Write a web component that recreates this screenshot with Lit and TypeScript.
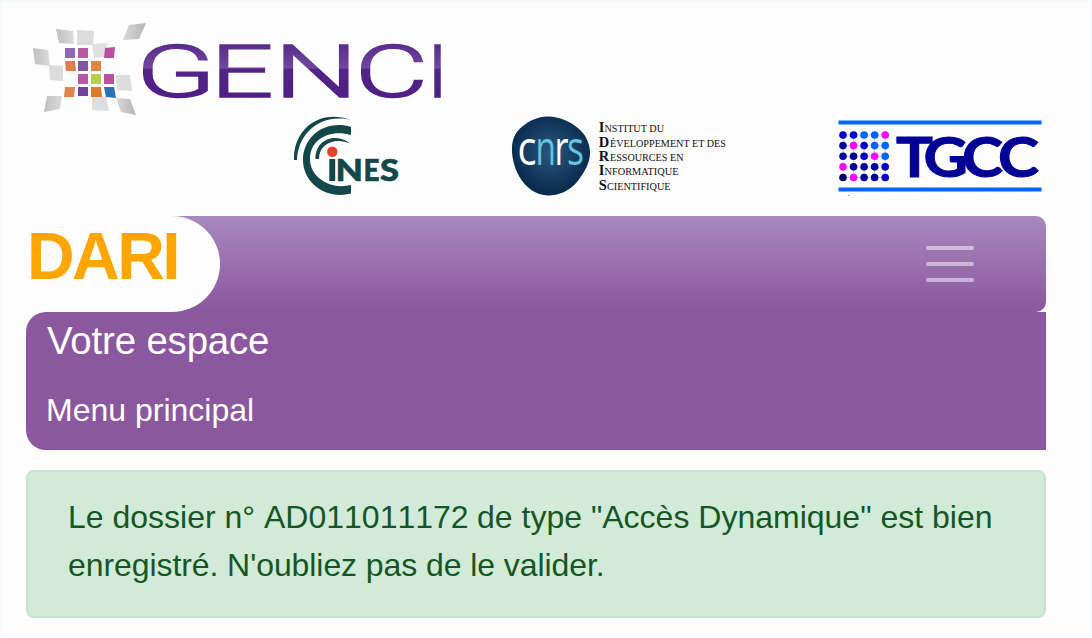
import { LitElement, html, svg, css } from "lit";
import { customElement } from "lit/decorators.js";

/** One letter of a wordmark: [character, left, width] */
type Letter = [string, number, number];

@customElement("genci-logo")
class GenciLogo extends LitElement {
  static styles = css`
    :host { display: block; }
    svg { display: block; }
    .word { font-family: Roboto, Inter, "Liberation Sans", sans-serif; font-weight: 300; font-size: 73px; stroke-width: 1.6px; }
  `;
  private letters: Letter[] = [
    ["G", 136, 80], ["E", 210.5, 63], ["N", 274, 84], ["C", 355, 73], ["I", 427, 21],
  ];
  private tiles: [string, string][] = [
    ["56,29 73,31 74,44 59,43", "url(#tileB)"],
    ["77,30 94,31 93,45 77,45", "#dcdcdc"],
    ["129,25 146,23 139,39 123,40", "url(#tileA)"],
    ["92,44 108,43 104,57 94,58", "#e0e0e0"],
    ["33,48 48,50 50,66 35,64", "url(#tileB)"],
    ["49,65 63,66 63,81 50,80", "#dcdcdc"],
    ["116,75 130,75 132,91 117,90", "#dcdcdc"],
    ["47,96 62,96 60,109 44,112", "url(#tileB)"],
    ["92,97 106,96 109,111 92,110", "#dedede"],
    ["116,98 130,99 136,115 121,112", "url(#tileA)"],
    ["65,48 75,48 75,58 65,58", "#9068b4"],
    ["78,48 88,48 88,58 78,58", "#bd58a3"],
    ["105,48 115,47 114,58 104,58", "#b9509f"],
    ["65,61 75,61 76,71 66,71", "#e07f4b"],
    ["78,61 88,61 88,71 78,71", "#7f55a4"],
    ["91,61 101,61 101,71 91,71", "#e08545"],
    ["78,74 88,74 88,84 78,84", "#bd55a6"],
    ["91,74 101,74 101,84 91,84", "#b7cf50"],
    ["104,74 114,74 114,84 104,84", "#b953a1"],
    ["65,87 75,87 74,97 64,97", "#e08650"],
    ["78,87 88,87 88,96 78,96", "#70429a"],
    ["91,87 101,87 102,97 91,97", "#dc7a29"],
    ["104,87 114,87 116,98 106,97", "#2873b8"],
  ];
  render() {
    return html`<svg width="450" height="116" viewBox="0 0 450 116" role="img" aria-label="GENCI">
      <defs>
        <linearGradient id="tileA"><stop stop-color="#d8d8d8" /><stop offset="1" stop-color="#b5b5b5" /></linearGradient>
        <linearGradient id="tileB"><stop stop-color="#bfbfbf" /><stop offset="1" stop-color="#dcdcdc" /></linearGradient>
        <linearGradient id="ink" gradientUnits="userSpaceOnUse" x1="0" y1="44" x2="0" y2="98">
          <stop stop-color="#572b8b" /><stop offset=".45" stop-color="#71489f" />
          <stop offset=".46" stop-color="#532588" /><stop offset="1" stop-color="#4f1f84" />
        </linearGradient>
      </defs>
      ${this.tiles.map(([p, f]) => svg`<polygon points=${p} fill=${f} />`)}
      ${this.letters.map(([c, x, w]) => svg`<text class="word" x=${x} y="97.200" textLength=${w} lengthAdjust="spacingAndGlyphs" fill="url(#ink)" stroke="url(#ink)">${c}</text>`)}
    </svg>`;
  }
}

@customElement("cines-logo")
class CinesLogo extends LitElement {
  static styles = css`
    :host { display: block; }
    svg { display: block; }
    .word { font-family: Lato, "Open Sans", sans-serif; font-weight: 900; font-size: 31px; fill: #14474a; stroke: #14474a; stroke-width: .6px; }
  `;
  private letters: Letter[] = [["N", 335.5, 27.5], ["E", 363.5, 16], ["S", 380, 19]];
  render() {
    return html`<svg width="110" height="84" viewBox="292 114 110 84" role="img" aria-label="CINES">
      <path fill="#14474a" d="M294 160C293 130 319 108 351 120C322 113 298 132 297 160Z" />
      <path fill="#14474a" d="M351 127C326 119 303 136 303 160C303 183 326 200 351 193.500V185C331 190 310 178 310 159C310 139 330 129 351 135Z" />
      <path fill="#14474a" d="M315.500 159C315 141 333 131 350.500 143.500C335 137 319 143 319 159Z" />
      <circle cx="332.300" cy="151.700" r="5.200" fill="#e0452c" />
      <rect x="329.300" y="159" width="5.900" height="22" fill="#14474a" />
      ${this.letters.map(([c, x, w]) => svg`<text class="word" x=${x} y="180.700" textLength=${w} lengthAdjust="spacingAndGlyphs">${c}</text>`)}
    </svg>`;
  }
}

@customElement("idris-logo")
class IdrisLogo extends LitElement {
  static styles = css`
    :host { display: block; }
    svg { display: block; }
    .cnrs { font-family: "Open Sans", sans-serif; font-weight: 500; font-size: 47px; }
    .line { font-family: "Liberation Serif", serif; font-size: 11px; fill: #111; }
    .cap { font-family: "Liberation Serif", serif; font-weight: 700; font-size: 14.5px; fill: #111; }
  `;
  private lines: [string, string, number, number][] = [
    ["I", "NSTITUT DU", 604.5, 59.5], ["D", "ÉVELOPPEMENT ET DES", 610, 116], ["R", "ESSOURCES EN", 610, 73.5],
    ["I", "NFORMATIQUE", 604.5, 74], ["S", "CIENTIFIQUE", 607, 63.5],
  ];
  private cnrs: [string, number, number, string][] = [
    ["c", 517.5, 19, "#fff"], ["n", 535.5, 20.5, "#62c4dd"], ["r", 554.5, 14, "#fff"], ["s", 567, 17, "#62c4dd"],
  ];
  render() {
    return html`<svg width="220" height="84" viewBox="510 114 220 84" role="img" aria-label="CNRS IDRIS">
      <defs><radialGradient id="blob" cy=".45"><stop stop-color="#2a5880" /><stop offset="1" stop-color="#0a2c4f" /></radialGradient></defs>
      <path fill="url(#blob)" d="M547 116.500C558 116 570 121 579 129C587 136 590 145 590 153C590 162 585 172 577 182C569 191 559 195.500 548 195.500C536 195.500 525 187 519 176C514 167 511.500 156 512 147C512.500 138 516 131 523 126C530 120 538 117 547 116.500Z" />
      ${this.cnrs.map(([c, x, w, f]) => svg`<text class="cnrs" x=${x} y="164.500" textLength=${w} lengthAdjust="spacingAndGlyphs" fill=${f}>${c}</text>`)}
      ${this.lines.map(([a, b, x, w], i) => svg`<text class="cap" x="598.700" y=${132.3 + i * 14.3}>${a}</text><text class="line" x=${x} y=${132.3 + i * 14.3} textLength=${w} lengthAdjust="spacingAndGlyphs">${b}</text>`)}
    </svg>`;
  }
}

@customElement("tgcc-logo")
class TgccLogo extends LitElement {
  static styles = css`
    :host { display: block; }
    svg { display: block; }
    .word { font-family: Lato, "Liberation Sans", sans-serif; font-weight: 700; font-size: 56px; fill: #000096; stroke: #000096; stroke-width: 1px; }
  `;
  private dots = ["bbllm", "dmbll", "ddbml", "mdddb", "kmddb"];
  private ink: Record<string, string> = { b: "#0000c8", l: "#0064ff", m: "#ff00ff", d: "#000096", k: "#000064" };
  private letters: Letter[] = [["T", 896, 37], ["G", 923.5, 44.5], ["C", 962, 41], ["C", 998, 41]];
  render() {
    return html`<svg width="206" height="84" viewBox="837 114 206 84" role="img" aria-label="TGCC">
      <rect x="838.500" y="120.500" width="203" height="4" fill="#0064ff" />
      <rect x="838.500" y="187.500" width="203" height="4" fill="#0064ff" />
      <path d="M843 135V178M853.500 135V178M864 135V178M874.500 135V178M885 135V178M843 135H885M843 145.700H885M843 156.300H885M843 167H885M843 177.500H885" stroke="#b8b8c8" stroke-width=".7" />
      ${this.dots.map((row, r) => [...row].map((c, i) => svg`<circle cx=${843 + i * 10.55} cy=${135 + r * 10.62} r="3.800" fill=${this.ink[c]} />`))}
      ${this.letters.map(([c, x, w]) => svg`<text class="word" x=${x} y="177.200" textLength=${w} lengthAdjust="spacingAndGlyphs">${c}</text>`)}
      <rect x="848" y="195" width="2" height="1" fill="#aaa" />
    </svg>`;
  }
}

@customElement("app-root")
class AppRoot extends LitElement {
  static styles = css`
    :host { display: block; font-family: "Liberation Sans", Arial, sans-serif; font-size: 32px; line-height: 48px; }
    .page { box-sizing: border-box; height: 638px; border: 2px solid #f5fafd; background: #fdfdfd; padding: 0 44px 0 24px; overflow: hidden; }
    genci-logo { height: 114px; margin-left: -26px; margin-top: -2px; }
    .partners { display: flex; height: 102px; padding-left: 266px; }
    idris-logo { margin-left: 108px; }
    tgcc-logo { margin-left: 107px; }
    .bar { display: flex; justify-content: space-between; height: 96px; border-radius: 10px; background: linear-gradient(#a988bf, #8b58a0 97%); }
    .brand { box-sizing: border-box; width: 194px; background: #fdfdfd; border-radius: 0 48px 48px 0; padding: 4px 0 0 1px; color: #ffa500; font-size: 66px; font-weight: 700; line-height: 73px; letter-spacing: -2.6px; }
    .toggle { display: flex; flex-direction: column; gap: 12px; padding: 30px 72px 0 0; }
    .toggle span { width: 48px; height: 4px; border-radius: 2px; background: rgba(255,255,255,.5); }
    .space { box-sizing: border-box; height: 138px; border-radius: 20px 0 0 20px; background: #8b58a0; color: #fff; padding: 5px 20px 0; }
    .title { font-size: 38.4px; line-height: 48px; padding-left: 1px; letter-spacing: -0.15px; }
    .menu { margin-top: 21px; }
    .alert { box-sizing: border-box; height: 148px; margin-top: 20px; border: 2px solid #c3e6cb; border-radius: 8px; background: #d2ebd9; color: #155724; padding: 21px 38px 0 40px; white-space: nowrap; }
    .number { font-kerning: none; margin-right: -.5px; }
    .second { letter-spacing: -0.08px; }
  `;
  render() {
    return html`<div class="page">
      <genci-logo></genci-logo>
      <div class="partners"><cines-logo></cines-logo><idris-logo></idris-logo><tgcc-logo></tgcc-logo></div>
      <nav class="bar">
        <div class="brand">DARI</div>
        <div class="toggle"><span></span><span></span><span></span></div>
      </nav>
      <section class="space">
        <div class="title">Votre espace</div>
        <div class="menu">Menu principal</div>
      </section>
      <div class="alert">Le dossier n° <span class="number">AD011011172</span> de type "Accès Dynamique" est bien<br /><span class="second">enregistré. N'oubliez pas de le valider.</span></div>
    </div>`;
  }
}
